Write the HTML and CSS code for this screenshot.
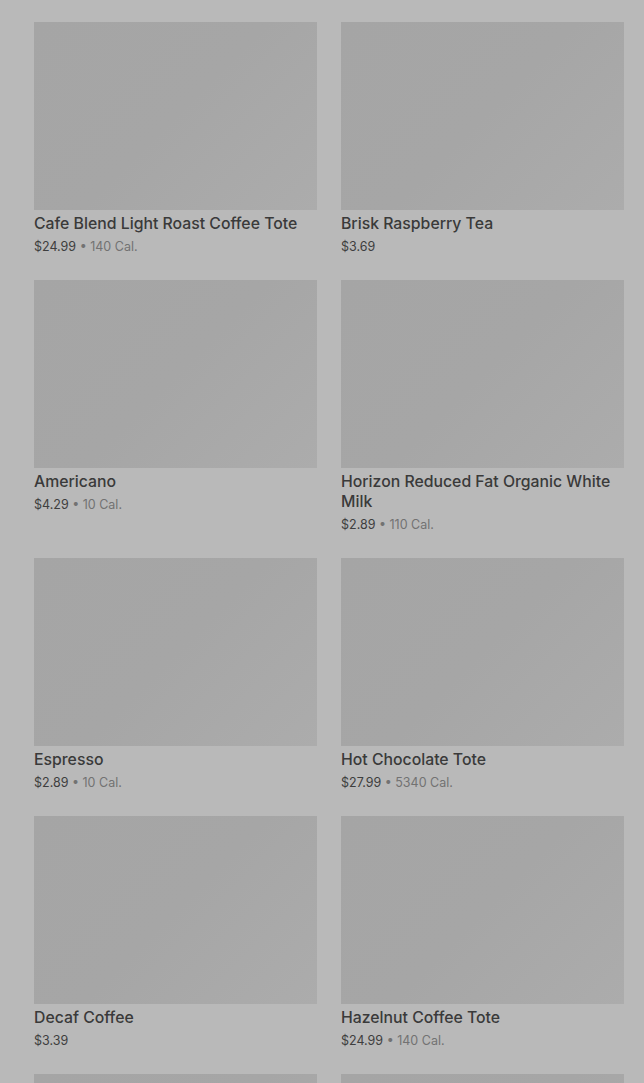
FILE: index.html
```html
<!DOCTYPE html>
<html lang="en">
<head>
    <meta charset="UTF-8">
    <meta name="viewport" content="width=device-width, initial-scale=1.0">
    <title>Menu</title>
    <link rel="stylesheet" href="styles.css">
</head>
<body>
    <div class="product-list">
        <div class="product-card">
            <div class="product-image"></div>
            <h3 class="product-name">Cafe Blend Light Roast Coffee Tote</h3>
            <p class="product-meta"><span class="product-price">$24.99</span> • 140 Cal.</p>
        </div>
        <div class="product-card">
            <div class="product-image"></div>
            <h3 class="product-name">Brisk Raspberry Tea</h3>
            <p class="product-meta"><span class="product-price">$3.69</span></p>
        </div>
        <div class="product-card">
            <div class="product-image"></div>
            <h3 class="product-name">Americano</h3>
            <p class="product-meta"><span class="product-price">$4.29</span> • 10 Cal.</p>
        </div>
        <div class="product-card">
            <div class="product-image"></div>
            <h3 class="product-name">Horizon Reduced Fat Organic White Milk</h3>
            <p class="product-meta"><span class="product-price">$2.89</span> • 110 Cal.</p>
        </div>
        <div class="product-card">
            <div class="product-image"></div>
            <h3 class="product-name">Espresso</h3>
            <p class="product-meta"><span class="product-price">$2.89</span> • 10 Cal.</p>
        </div>
        <div class="product-card">
            <div class="product-image"></div>
            <h3 class="product-name">Hot Chocolate Tote</h3>
            <p class="product-meta"><span class="product-price">$27.99</span> • 5340 Cal.</p>
        </div>
        <div class="product-card">
            <div class="product-image"></div>
            <h3 class="product-name">Decaf Coffee</h3>
            <p class="product-meta"><span class="product-price">$3.39</span></p>
        </div>
        <div class="product-card">
            <div class="product-image"></div>
            <h3 class="product-name">Hazelnut Coffee Tote</h3>
            <p class="product-meta"><span class="product-price">$24.99</span> • 140 Cal.</p>
        </div>
        <div class="product-card">
            <div class="product-image"></div>
        </div>
        <div class="product-card">
            <div class="product-image"></div>
        </div>
    </div>
</body>
</html>
```

FILE: styles.css
```css
body {
    font-family: Inter, Roboto, "Liberation Sans", sans-serif;
    margin: 0;
    background-color: #b9b9b9;
    color: #3a3a3a;
    overflow: hidden;
}
.product-list {
    display: grid;
    grid-template-columns: 283px 283px;
    column-gap: 24px;
    row-gap: 23px;
    padding: 22px 20px 0 34px;
}
.product-card {
    display: flex;
    flex-direction: column;
}
.product-image {
    height: 188px;
    background: linear-gradient(135deg, #a5a5a5 0%, #a6a6a6 50%, #acacac 100%);
}
.product-name {
    margin: 4px 0 0;
    font-size: 15.8px;
    font-weight: 500;
    line-height: 20px;
    color: #3a3a3a;
}
.product-meta {
    margin: 3px 0 0;
    font-size: 12.5px;
    line-height: 20px;
    color: #727272;
}
.product-price {
    color: #3e3e3e;
}
```
